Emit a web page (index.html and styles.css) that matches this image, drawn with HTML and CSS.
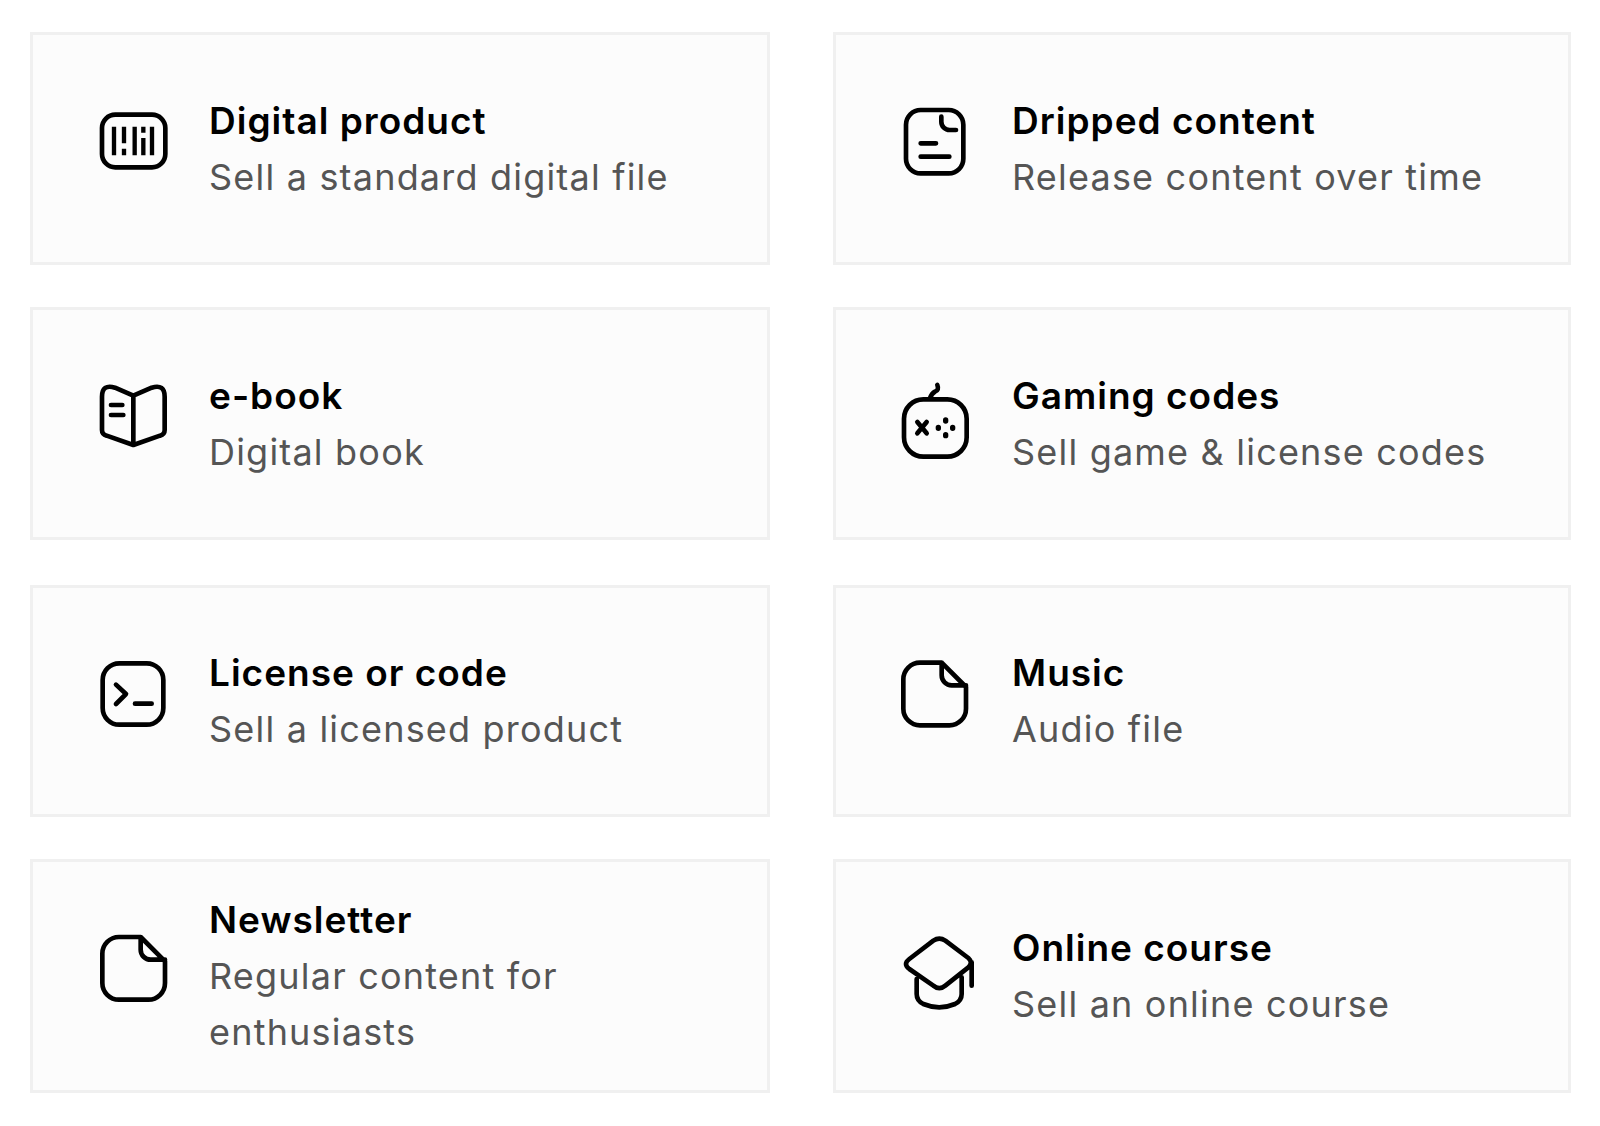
FILE: index.html
```html
<!DOCTYPE html>
<html lang="en">
<head>
	<meta charset="UTF-8">
	<meta name="viewport" content="width=device-width, initial-scale=1.0">
	<title>Product types</title>
	<link rel="stylesheet" href="styles.css">
</head>
<body>
	<div class="type-grid">
		<div class="type-card">
			<svg class="type-icon" viewBox="0 0 300 300"><rect x="66" y="74" width="190" height="158" rx="40"/><path class="bars" d="M102 110V196M132 110V160M132 176V196M164 110V196M190 110V128M190 144V196M216 110V196"/></svg>
			<div class="type-text">
				<h3>Digital product</h3>
				<p>Sell a standard digital file</p>
			</div>
		</div>
		<div class="type-card">
			<svg class="type-icon" viewBox="9 0 300 300"><rect x="78" y="60" width="172" height="190" rx="44"/><path d="M184 80V95A25 25 0 0 0 209 120H228M122 160H168M122 200H208"/></svg>
			<div class="type-text">
				<h3>Dripped content</h3>
				<p>Release content over time</p>
			</div>
		</div>
		<div class="type-card">
			<svg class="type-icon" viewBox="0 0 300 300"><path d="M160 92L105 68Q66 56 66 95V195Q66 208 80 212L160 240L240 212Q254 208 254 195V95Q254 56 215 68ZM160 92V240M93 120H127M93 150H130"/></svg>
			<div class="type-text">
				<h3>e-book</h3>
				<p>Digital book</p>
			</div>
		</div>
		<div class="type-card">
			<svg class="type-icon" viewBox="9 -15 300 300"><rect x="72" y="88" width="188" height="172" rx="58"/><path d="M150 85Q155 70 165 65Q178 60 172 45M112 156L140 190M140 156L112 190"/><path class="dots" d="M197 150V153M175 172V175M218 172V175M197 194V197"/></svg>
			<div class="type-text">
				<h3>Gaming codes</h3>
				<p>Sell game &amp; license codes</p>
			</div>
		</div>
		<div class="type-card row-three">
			<svg class="type-icon" viewBox="0 -7 300 300"><rect x="68" y="54" width="182" height="184" rx="50"/><path d="M108 118L138 146L108 176M165 175H215"/></svg>
			<div class="type-text">
				<h3>License or code</h3>
				<p>Sell a licensed product</p>
			</div>
		</div>
		<div class="type-card row-three">
			<svg class="type-icon" viewBox="9 -7 300 300"><path d="M185 52H120A50 50 0 0 0 70 102V190A50 50 0 0 0 120 240H208A50 50 0 0 0 258 190V125ZM185 52V90A30 30 0 0 0 215 120H258"/></svg>
			<div class="type-text">
				<h3>Music</h3>
				<p>Audio file</p>
			</div>
		</div>
		<div class="type-card">
			<svg class="type-icon" viewBox="3 -5 300 300"><path d="M185 52H120A50 50 0 0 0 70 102V190A50 50 0 0 0 120 240H208A50 50 0 0 0 258 190V125ZM185 52V90A30 30 0 0 0 215 120H258"/></svg>
			<div class="type-text">
				<h3>Newsletter</h3>
				<p>Regular content for enthusiasts</p>
			</div>
		</div>
		<div class="type-card">
			<svg class="type-icon" viewBox="9 -8 300 300"><path d="M160 60Q178 48 196 60L265 112Q280 125 265 140L196 195Q178 210 160 195L88 145Q68 130 88 115ZM110 175V220Q110 240 130 250Q178 270 225 250Q245 240 245 220V170M275 125V195"/></svg>
			<div class="type-text">
				<h3>Online course</h3>
				<p>Sell an online course</p>
			</div>
		</div>
	</div>
</body>
</html>
```

FILE: styles.css
```css
body {
	margin: 0;
	background: #fff;
	font-family: Inter, "Open Sans", sans-serif;
}
.type-grid {
	display: grid;
	grid-template-columns: 740px 738px;
	grid-template-rows: 233px 233px 235px 234px;
	column-gap: 63px;
	row-gap: 42px;
	padding: 32px 0 0 30px;
}
.type-card {
	display: flex;
	align-items: center;
	gap: 29px;
	box-sizing: border-box;
	padding: 0 47px;
	background: #fcfcfc;
	border: 3px solid #f0f0f0;
}
.row-three {
	margin-top: 3px;
}
.type-icon {
	flex: none;
	width: 100px;
	height: 100px;
	margin-bottom: 17px;
	fill: none;
	stroke: #000;
	stroke-width: 14;
	stroke-linecap: round;
	stroke-linejoin: round;
}
.type-icon .bars {
	stroke-width: 13;
	stroke-linecap: butt;
}
.type-icon .dots {
	stroke-width: 16;
}
.type-text h3 {
	margin: 0;
	font-size: 37px;
	font-weight: 600;
	line-height: 56px;
	letter-spacing: 1px;
	color: #000;
}
.type-text p {
	margin: 0;
	font-size: 36px;
	font-weight: 400;
	line-height: 56px;
	letter-spacing: 1.2px;
	color: #555;
}
```
